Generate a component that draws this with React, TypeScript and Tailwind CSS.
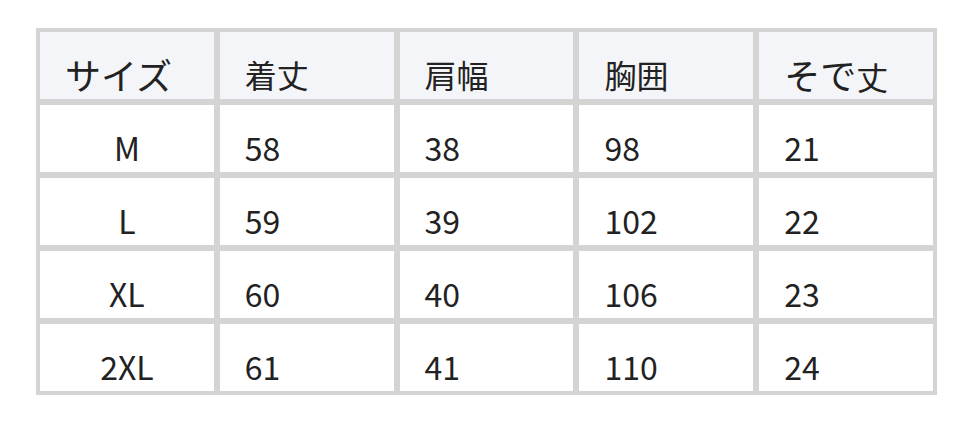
import React from "react";

const headers: React.ReactNode[] = [
  <span key="a" className="text-[36px]">サイズ</span>,
  "着丈",
  "肩幅",
  "胸囲",
  <span key="b">
    <span className="text-[36px]">そで</span>丈
  </span>,
];
const rows = [
  ["M", "58", "38", "98", "21"],
  ["L", "59", "39", "102", "22"],
  ["XL", "60", "40", "106", "23"],
  ["2XL", "61", "41", "110", "24"],
];

export default function App() {
  return (
    <div
      className="w-[972px] h-[422px] bg-white pt-[28px] pl-[36px]"
      style={{ fontFamily: '"Noto Sans CJK JP", "Noto Sans", sans-serif' }}
    >
      <div className="w-[901px] bg-[#d4d4d4] p-[4px] grid grid-cols-5 gap-[6px] text-[32px] leading-[40px] text-[#222222]">
        {headers.map((h, i) => (
          <div
            key={i}
            className="h-[67px] bg-[#f4f5f9] pt-[22px] pl-[25px] whitespace-nowrap"
          >
            {h}
          </div>
        ))}
        {rows.map((r) =>
          r.map((c, i) => (
            <div
              key={r[0] + i}
              className={
                "h-[67px] bg-white pt-[22px] " +
                (i === 0 ? "text-center" : "pl-[25px]")
              }
            >
              {c}
            </div>
          ))
        )}
      </div>
    </div>
  );
}
